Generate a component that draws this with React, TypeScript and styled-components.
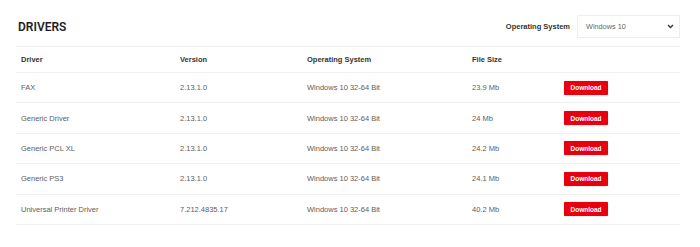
import React from "react";
import styled, { createGlobalStyle } from "styled-components";

const GlobalStyle = createGlobalStyle`
  html, body {
    margin: 0;
    padding: 0;
    background: #ffffff;
  }
  body {
    font-family: "Liberation Sans", Arial, sans-serif;
  }
`;

const Page = styled.div`
  width: 700px;
  box-sizing: border-box;
  padding: 15px 20px 0 16px;
`;

const TopBar = styled.div`
  display: flex;
  align-items: center;
  justify-content: space-between;
  height: 23px;
  margin-bottom: 8px;
`;

const Title = styled.h2`
  margin: 1px 0 0 2px;
  font-family: Roboto, "Liberation Sans", sans-serif;
  font-weight: 600;
  font-size: 12px;
  letter-spacing: 0;
  color: #1f1f1f;
`;

const Filter = styled.div`
  display: flex;
  align-items: center;
  gap: 7px;
`;

const FilterLabel = styled.span`
  font-size: 7.5px;
  font-weight: 700;
  color: #333;
`;

const SelectBox = styled.div`
  box-sizing: border-box;
  width: 103px;
  height: 23px;
  border: 1px solid #eeeeee;
  display: flex;
  align-items: center;
  justify-content: space-between;
  padding: 0 5px 0 8px;
  font-size: 7.3px;
  color: #666;
`;

const Table = styled.table`
  width: 664px;
  border-collapse: collapse;
  table-layout: fixed;
`;

const HeadCell = styled.th<{ $w?: number }>`
  box-sizing: border-box;
  ${(p) => (p.$w ? `width: ${p.$w}px;` : "")}
  height: 26px;
  padding: 0 5px;
  text-align: left;
  font-size: 7.5px;
  font-weight: 700;
  color: #333;
  border-top: 1px solid #efefef;
  border-bottom: 1px solid #efefef;
`;

const Row = styled.tr`
  height: 30.4px;
`;

const Cell = styled.td`
  box-sizing: border-box;
  padding: 0 5px;
  font-size: 7.5px;
  color: #606060;
  border-bottom: 1px solid #f0f0f0;
  vertical-align: middle;
`;

const DownloadButton = styled.button`
  box-sizing: border-box;
  width: 44px;
  height: 14px;
  padding: 0;
  border: none;
  border-radius: 1px;
  background: #e8000f;
  color: #fff;
  font-family: "Liberation Sans", Arial, sans-serif;
  font-size: 6.5px;
  font-weight: 700;
  display: flex;
  align-items: center;
  justify-content: center;
  box-shadow: 0 0 1px rgba(232, 0, 15, 0.5);
`;

const drivers = [
  { name: "FAX", version: "2.13.1.0", size: "23.9 Mb" },
  { name: "Generic Driver", version: "2.13.1.0", size: "24 Mb" },
  { name: "Generic PCL XL", version: "2.13.1.0", size: "24.2 Mb" },
  { name: "Generic PS3", version: "2.13.1.0", size: "24.1 Mb" },
  { name: "Universal Printer Driver", version: "7.212.4835.17", size: "40.2 Mb" },
];

const Chevron = () => (
  <svg width="7" height="5" viewBox="0 0 7 5">
    <path d="M1 1l2.5 2.5L6 1" fill="none" stroke="#333" strokeWidth="1.3" />
  </svg>
);

export default function App() {
  return (
    <>
      <GlobalStyle />
      <Page>
        <TopBar>
          <Title>DRIVERS</Title>
          <Filter>
            <FilterLabel>Operating System</FilterLabel>
            <SelectBox>
              <span>Windows 10</span>
              <Chevron />
            </SelectBox>
          </Filter>
        </TopBar>
        <Table>
          <thead>
            <tr>
              <HeadCell $w={159}>Driver</HeadCell>
              <HeadCell $w={127}>Version</HeadCell>
              <HeadCell $w={165}>Operating System</HeadCell>
              <HeadCell $w={92}>File Size</HeadCell>
              <HeadCell />
            </tr>
          </thead>
          <tbody>
            {drivers.map((d) => (
              <Row key={d.name}>
                <Cell>{d.name}</Cell>
                <Cell>{d.version}</Cell>
                <Cell>Windows 10 32-64 Bit</Cell>
                <Cell>{d.size}</Cell>
                <Cell>
                  <DownloadButton>Download</DownloadButton>
                </Cell>
              </Row>
            ))}
          </tbody>
        </Table>
      </Page>
    </>
  );
}
